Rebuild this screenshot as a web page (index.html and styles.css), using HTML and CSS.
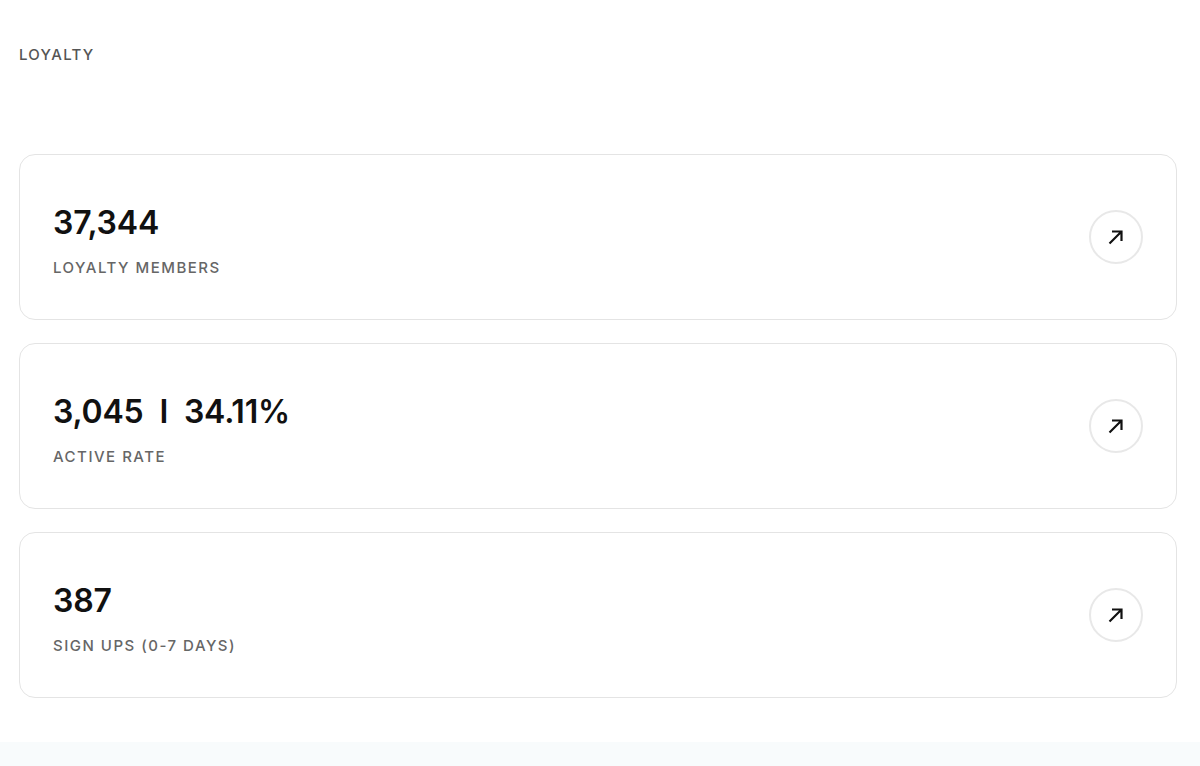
FILE: index.html
```html
<!DOCTYPE html>
<html>
<head>
<meta charset="utf-8">
<link rel="stylesheet" href="styles.css">
</head>
<body>
<div class="page">
  <div class="title">LOYALTY</div>
  <div class="cards">
    <div class="card">
      <div class="text">
        <div class="value">37,344</div>
        <div class="label">LOYALTY MEMBERS</div>
      </div>
      <div class="btn"><svg width="20" height="20" viewBox="0 0 20 20"><path d="M3.5 16.5 L15.5 4.5 M6 4.5 H15.5 V14" fill="none" stroke="#111" stroke-width="2.2"/></svg></div>
    </div>
    <div class="card">
      <div class="text">
        <div class="value">3,045 <span class="sep">I</span> 34.11%</div>
        <div class="label">ACTIVE RATE</div>
      </div>
      <div class="btn"><svg width="20" height="20" viewBox="0 0 20 20"><path d="M3.5 16.5 L15.5 4.5 M6 4.5 H15.5 V14" fill="none" stroke="#111" stroke-width="2.2"/></svg></div>
    </div>
    <div class="card">
      <div class="text">
        <div class="value">387</div>
        <div class="label">SIGN UPS (0-7 DAYS)</div>
      </div>
      <div class="btn"><svg width="20" height="20" viewBox="0 0 20 20"><path d="M3.5 16.5 L15.5 4.5 M6 4.5 H15.5 V14" fill="none" stroke="#111" stroke-width="2.2"/></svg></div>
    </div>
  </div>
</div>
<div class="band"></div>
</body>
</html>
```
FILE: styles.css
```css
html, body {
  margin: 0;
  padding: 0;
  background: #fff;
}
body {
  font-family: Inter, "Noto Sans", sans-serif;
  height: 766px;
  overflow: hidden;
  display: flex;
  flex-direction: column;
}
.page {
  padding: 45px 23px 0 19px;
  flex: 1;
}
.title {
  font-size: 15px;
  font-weight: 500;
  letter-spacing: 1.3px;
  color: #555;
  line-height: 20px;
}
.cards {
  margin-top: 89px;
  display: flex;
  flex-direction: column;
  gap: 23px;
}
.card {
  height: 164px;
  border: 1px solid #e4e4e4;
  border-radius: 16px;
  display: flex;
  align-items: center;
  justify-content: space-between;
  padding: 0 33px;
}
.text {
  display: flex;
  flex-direction: column;
  gap: 15px;
  padding-top: 7px;
}
.value {
  font-size: 32px;
  font-weight: 600;
  color: #111;
  line-height: 40px;
  letter-spacing: -0.2px;
}
.sep {
  font-weight: 600;
  margin: 0 8px;
}
.label {
  font-size: 15px;
  font-weight: 500;
  letter-spacing: 1.5px;
  color: #666;
  line-height: 20px;
}
.btn {
  width: 50px;
  height: 50px;
  border: 2px solid #e8e8e8;
  border-radius: 50%;
  display: flex;
  align-items: center;
  justify-content: center;
}
.band {
  height: 24px;
  background: #f8fbfc;
}
```
